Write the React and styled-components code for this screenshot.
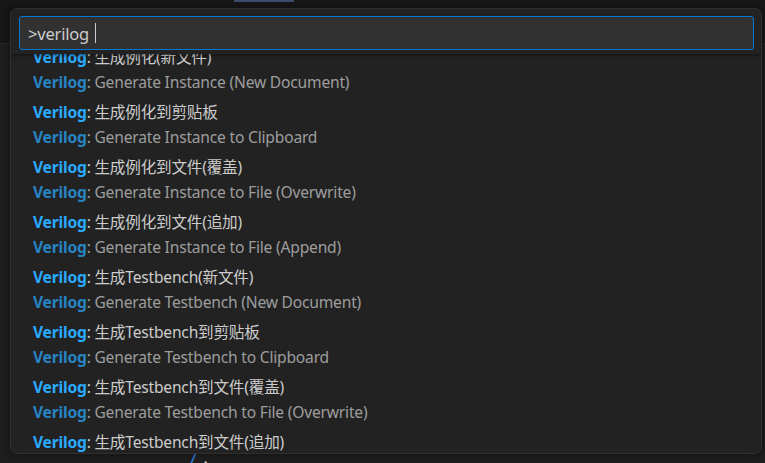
import React from "react";
import styled, { createGlobalStyle } from "styled-components";

const items = [
    { label: "生成例化(新文件)", detail: "Generate Instance (New Document)" },
    { label: "生成例化到剪贴板", detail: "Generate Instance to Clipboard" },
    { label: "生成例化到文件(覆盖)", detail: "Generate Instance to File (Overwrite)" },
    { label: "生成例化到文件(追加)", detail: "Generate Instance to File (Append)" },
    { label: "生成Testbench(新文件)", detail: "Generate Testbench (New Document)" },
    { label: "生成Testbench到剪贴板", detail: "Generate Testbench to Clipboard" },
    { label: "生成Testbench到文件(覆盖)", detail: "Generate Testbench to File (Overwrite)" },
    { label: "生成Testbench到文件(追加)", detail: "Generate Testbench to File (Append)" },
];

const App = () => {
    return (
        <Page>
            <GlobalStyle />
            <TabBar>
                <ActiveTab />
            </TabBar>
            <Editor>
                <CodePeek>
                    <span className="kw">/</span>,
                </CodePeek>
            </Editor>
            <Widget>
                <Header>
                    <InputBox>
                        <span>&gt;verilog</span>
                        <Caret />
                    </InputBox>
                </Header>
                <ListViewport>
                    <List>
                        {items.map((item, i) => (
                            <Row key={i}>
                                <Line>
                                    <Hl>Verilog</Hl>: {item.label}
                                </Line>
                                <Line detail>
                                    <Hl>Verilog</Hl>: {item.detail}
                                </Line>
                            </Row>
                        ))}
                    </List>
                </ListViewport>
            </Widget>
        </Page>
    );
};

const GlobalStyle = createGlobalStyle`
    html, body {
        margin: 0;
        padding: 0;
        background: #1f1f1f;
    }
    body {
        font-family: "Noto Sans", "Noto Sans CJK SC", sans-serif;
    }
`;

const Page = styled.div`
    position: relative;
    width: 765px;
    height: 463px;
    overflow: hidden;
    background: #1f1f1f;
    display: flex;
    flex-direction: column;
`;

const TabBar = styled.div`
    height: 43px;
    background: #181818;
    border-bottom: 1px solid #2b2b2b;
`;

const ActiveTab = styled.div`
    margin-left: 234px;
    width: 60px;
    height: 2px;
    background: #3c4d70;
`;

const Editor = styled.div`
    flex: 1;
    display: flex;
    align-items: flex-end;
`;

const CodePeek = styled.div`
    margin: 0 0 -5px 189px;
    font-family: "DejaVu Sans Mono", monospace;
    font-size: 15px;
    line-height: 18px;
    letter-spacing: 3px;
    color: #e0e0e0;
    .kw {
        color: #3794ff;
    }
`;

const Widget = styled.div`
    position: absolute;
    left: 10px;
    top: 8px;
    width: 752px;
    height: 446px;
    box-sizing: border-box;
    background: #222222;
    border: 1px solid #2f2f2f;
    border-radius: 7px;
    box-shadow: 0 0 8px 2px rgba(0, 0, 0, 0.36);
    display: flex;
    flex-direction: column;
    overflow: hidden;
`;

const Header = styled.div`
    padding: 7px 7px 4px 8px;
    position: relative;
    z-index: 1;
    box-shadow: 0 2px 3px rgba(0, 0, 0, 0.35);
`;

const InputBox = styled.div`
    height: 34px;
    box-sizing: border-box;
    border: 1px solid #0078d4;
    border-radius: 3px;
    background: #313131;
    display: flex;
    align-items: center;
    padding-left: 8px;
    color: #cccccc;
    font-size: 16.5px;
    letter-spacing: -0.2px;
`;

const Caret = styled.div`
    width: 1px;
    height: 20px;
    background: #cccccc;
    margin-left: 6px;
`;

const ListViewport = styled.div`
    flex: 1;
    overflow: hidden;
`;

const List = styled.div`
    margin-top: -14px;
`;

const Row = styled.div`
    height: 55px;
    box-sizing: border-box;
    padding: 4px 0 1px 22px;
    display: flex;
    flex-direction: column;
`;

const Line = styled.div`
    height: ${p => (p.detail ? "24px" : "26px")};
    line-height: ${p => (p.detail ? "24px" : "26px")};
    font-size: 15.6px;
    letter-spacing: -0.2px;
    color: #cccccc;
    opacity: ${p => (p.detail ? 0.72 : 1)};
    white-space: nowrap;
`;

const Hl = styled.span`
    color: #2aaaff;
    font-weight: bold;
`;

export default App;
